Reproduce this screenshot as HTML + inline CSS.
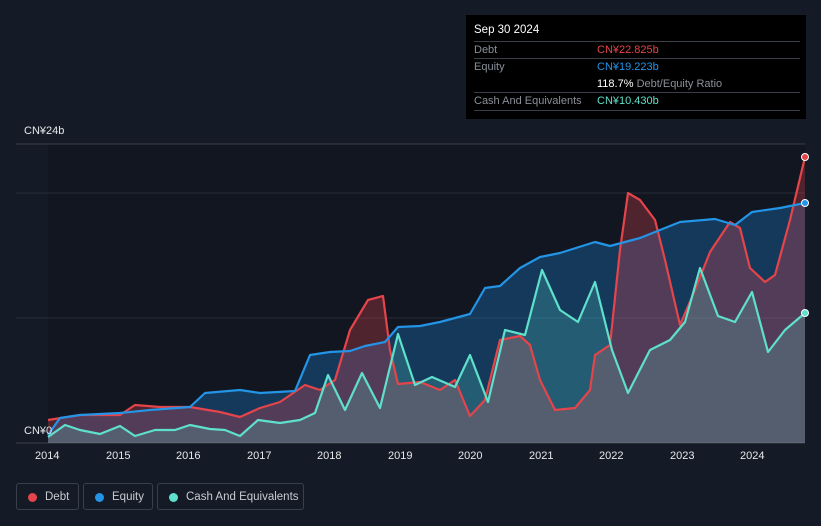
<!DOCTYPE html>
<html><head><meta charset="utf-8"><style>
body{margin:0;width:821px;height:526px;background:#151b26;font-family:"Liberation Sans",sans-serif;overflow:hidden;position:relative}
.tt{position:absolute;left:466px;top:15px;width:340px;height:104px;background:#000;color:#fff;font-size:11px}
.tt .row{position:absolute;left:8px;width:326px;border-top:1px solid #3a3f47;height:17px}
.lab{position:absolute;color:#8a8f98;font-size:11px}
.lg{position:absolute;top:483px;height:27px;border:1px solid #3a404b;border-radius:3px;color:#c7cbd1;font-size:11.5px;line-height:27px;box-sizing:border-box}
.lg i{position:absolute;left:11px;top:9px;width:9px;height:9px;border-radius:50%}
.ax{position:absolute;top:450px;color:#e6e8eb;font-size:11px}
</style></head><body>
<svg width="821" height="526" style="position:absolute;left:0;top:0">
<rect x="48" y="144" width="757" height="299" fill="#111620"/>
<line x1="16" y1="144" x2="805" y2="144" stroke="#3a3f48"/>
<line x1="16" y1="193" x2="805" y2="193" stroke="#262c36"/>
<line x1="16" y1="318" x2="805" y2="318" stroke="#262c36"/>
<line x1="16" y1="443" x2="805" y2="443" stroke="#3a3f48"/>
<polygon fill="rgba(33,150,243,0.28)" points="48,443 48,435 60,418 80,415 120,413 150,410 190,407 205,393 240,390 260,393 295,391 310,355 330,352 350,351 365,346 385,342 398,327 420,326 440,322 470,314 485,288 500,286 520,268 540,257 560,253 595,242 610,246 640,238 680,222 715,219 735,225 752,212 780,208 805,203 805,443"/>
<polygon fill="rgba(230,70,80,0.3)" points="48,443 48,420 80,415 120,415 135,405 160,407 190,407 220,412 240,417 260,408 280,402 305,385 320,390 335,380 350,330 368,300 383,296 390,350 398,384 420,382 440,390 455,380 470,416 485,400 500,340 520,336 530,345 540,380 555,410 575,408 590,390 595,355 610,345 620,250 628,193 640,200 655,220 665,260 680,325 695,290 710,252 730,222 740,228 750,268 765,282 775,275 790,220 805,157 805,443"/>
<polygon fill="rgba(90,220,200,0.22)" points="48,443 48,437 65,425 80,430 100,434 120,426 135,436 155,430 175,430 190,425 210,429 225,430 240,436 258,420 280,423 300,420 315,413 328,375 345,410 362,373 380,408 398,334 415,385 432,377 455,387 470,355 488,402 505,330 525,335 542,270 560,310 578,322 595,282 612,350 628,393 650,350 670,340 685,322 700,268 718,316 735,322 752,292 768,352 785,330 805,313 805,443"/>
<g fill="none" stroke-width="2.2" stroke-linejoin="round">
<polyline stroke="#e5444a" points="48,420 80,415 120,415 135,405 160,407 190,407 220,412 240,417 260,408 280,402 305,385 320,390 335,380 350,330 368,300 383,296 390,350 398,384 420,382 440,390 455,380 470,416 485,400 500,340 520,336 530,345 540,380 555,410 575,408 590,390 595,355 610,345 620,250 628,193 640,200 655,220 665,260 680,325 695,290 710,252 730,222 740,228 750,268 765,282 775,275 790,220 805,157"/>
<polyline stroke="#2394e6" points="48,435 60,418 80,415 120,413 150,410 190,407 205,393 240,390 260,393 295,391 310,355 330,352 350,351 365,346 385,342 398,327 420,326 440,322 470,314 485,288 500,286 520,268 540,257 560,253 595,242 610,246 640,238 680,222 715,219 735,225 752,212 780,208 805,203"/>
<polyline stroke="#5fe0cc" points="48,437 65,425 80,430 100,434 120,426 135,436 155,430 175,430 190,425 210,429 225,430 240,436 258,420 280,423 300,420 315,413 328,375 345,410 362,373 380,408 398,334 415,385 432,377 455,387 470,355 488,402 505,330 525,335 542,270 560,310 578,322 595,282 612,350 628,393 650,350 670,340 685,322 700,268 718,316 735,322 752,292 768,352 785,330 805,313"/>
</g>
<circle cx="805" cy="157" r="3.5" fill="#e5444a" stroke="#fff" stroke-width="1"/>
<circle cx="805" cy="203" r="3.5" fill="#2394e6" stroke="#fff" stroke-width="1"/>
<circle cx="805" cy="313" r="3.5" fill="#5fe0cc" stroke="#fff" stroke-width="1"/>
</svg>
<div style="position:absolute;left:24px;top:125px;color:#e6e8eb;font-size:11px">CN¥24b</div>
<div style="position:absolute;left:24px;top:425px;color:#e6e8eb;font-size:11px">CN¥0</div>
<div class="ax" style="left:35px">2014</div><div class="ax" style="left:106px">2015</div><div class="ax" style="left:176px">2016</div><div class="ax" style="left:247px">2017</div><div class="ax" style="left:317px">2018</div><div class="ax" style="left:388px">2019</div><div class="ax" style="left:458px">2020</div><div class="ax" style="left:529px">2021</div><div class="ax" style="left:599px">2022</div><div class="ax" style="left:670px">2023</div><div class="ax" style="left:740px">2024</div>
<div class="tt">
<div style="position:absolute;left:8px;top:9px;font-size:11.5px">Sep 30 2024</div>
<div class="row" style="top:26px"><span class="lab" style="left:0;top:2px">Debt</span><span style="position:absolute;left:123px;top:2px;color:#e5444a">CN¥22.825b</span></div>
<div class="row" style="top:43px"><span class="lab" style="left:0;top:2px">Equity</span><span style="position:absolute;left:123px;top:2px;color:#2394e6">CN¥19.223b</span><span style="position:absolute;left:123px;top:19px;color:#fff">118.7% <span style="color:#8a8f98">Debt/Equity Ratio</span></span></div>
<div class="row" style="top:77px;border-bottom:1px solid #3a3f47"><span class="lab" style="left:0;top:2px">Cash And Equivalents</span><span style="position:absolute;left:123px;top:2px;color:#5fe0cc">CN¥10.430b</span></div>
</div>
<div class="lg" style="left:16px;width:63px"><i style="background:#e5444a"></i><span style="position:absolute;left:28px">Debt</span></div>
<div class="lg" style="left:83px;width:70px"><i style="background:#2394e6"></i><span style="position:absolute;left:28px">Equity</span></div>
<div class="lg" style="left:157px;width:147px"><i style="background:#5fe0cc"></i><span style="position:absolute;left:28px">Cash And Equivalents</span></div>
</body></html>
